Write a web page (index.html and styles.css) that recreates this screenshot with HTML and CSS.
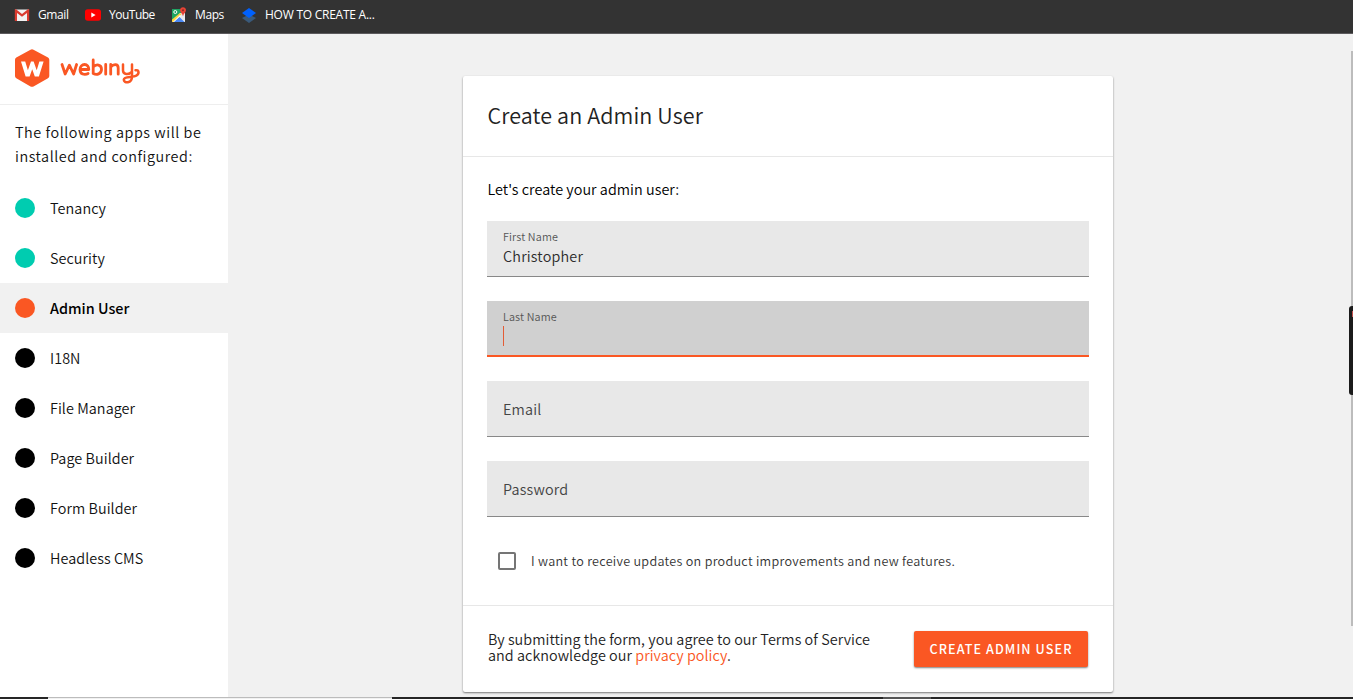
FILE: index.html
```html
<!DOCTYPE html>
<html lang="en">
<head>
<meta charset="utf-8">
<title>Webiny</title>
<link rel="stylesheet" href="styles.css">
</head>
<body>
<nav class="bookmarks">
  <a class="bookmark gmail"><svg width="16" height="16" viewBox="0 0 16 16"><path fill="#f2f2f2" d="M1 2.500h14v11.500H1z"/><path fill="#d93b30" d="M2 2.300 8 7l6-4.700h1.200V14H13V6L8 9.700 3 6v8H.8V2.300z"/></svg><span>Gmail</span></a>
  <a class="bookmark youtube"><svg width="16" height="16" viewBox="0 0 16 16"><rect y="2.300" width="16" height="11.500" rx="2.800" fill="#f00"/><path fill="#fff" d="m6.300 5.600 4.300 2.400-4.300 2.400z"/></svg><span>YouTube</span></a>
  <a class="bookmark maps"><svg width="16" height="16" viewBox="0 0 16 16"><path fill="#1fa463" d="M1 2h10v6L1 15z"/><path fill="#e8eaed" d="M9 6h5v9h-2L7 9z"/><path fill="#fbd341" d="m1 12.500 8-6.500 1.500 1.500L3 15H1z"/><path fill="#fff" d="m2 15 7-7 1 1-6 6z"/><path fill="#4a88f4" d="m3 15 5.500-5 5 5z"/><circle cx="4.300" cy="5" r="1.500" fill="none" stroke="#fff"/><path fill="#e74335" d="M12 .3c2 0 3 1.400 3 3 0 2-2.300 3-3 6-.7-3-3-4-3-6 0-1.600 1-3 3-3z"/><circle cx="12" cy="3.300" r="1" fill="#8c2b22"/></svg><span>Maps</span></a>
  <a class="bookmark article"><svg width="16" height="16" viewBox="0 0 16 16"><path fill="#3a5a7b" d="m1 11 7-3.500 7 3.500-7 5z"/><path fill="#0061fe" d="m1 6 7-5 7 5-7 5z"/></svg><span>HOW TO CREATE A...</span></a>
</nav>
<div class="layout">
  <aside class="sidebar">
    <div class="brand">
      <svg width="126" height="40" viewBox="0 0 126 40"><path fill="#fa5723" d="M15.500 1.700q1.500-.9 3 0L33 9.500q1.300.8 1.300 2.200v16.300q0 1.500-1.300 2.200L18.500 38.400q-1.500.8-3 0L1.300 30.200Q0 29.500 0 28V11.700Q0 10.300 1.300 9.500z"/><path fill="#fff" d="M6 13.500h4.200l2.700 8.800 3.100-8.800h2.600l3.100 8.800 2.700-8.800h4.200L23.900 28.500h-4.100l-2.600-7.200-2.600 7.200h-4z"/><g fill="none" stroke="#fa5723" stroke-width="2.800" stroke-linecap="round" stroke-linejoin="round"><path d="m47 16.500 3.200 9.500 4.200-8.800 4.200 8.800 3-9.500"/><path d="M65.500 21.500h8.300c0-3-1.700-5-4.200-5s-4.600 2-4.600 5c0 3.300 2 4.800 4.800 4.800q2 0 3.300-.8"/><path d="M78.200 12v13.500m0-6.500c3-3.500 8.300-2.500 8.300 2.200 0 5-4.800 6-8.300 4.300M90.700 16.500V26.200M95.700 26.200v-9.700m0 2.500c2.500-3 7.500-3.500 7.500 1v6.200"/><path stroke-width="2.500" d="M108 16.500v6c0 4.200 6 4.500 8.800 1.200M117 16.500v12c0 7.300-8.200 7-8.200 3.200 0-4 9.300-1.800 12.700-4.200 3.300-2.400 2.200-6-1-5.200"/></g></svg>
    </div>
    <p class="intro">The following apps will be<br>installed and configured:</p>
    <ul class="steps">
      <li class="step done"><i></i><span>Tenancy</span></li>
      <li class="step done"><i></i><span>Security</span></li>
      <li class="step active"><i></i><span>Admin User</span></li>
      <li class="step"><i></i><span>I18N</span></li>
      <li class="step"><i></i><span>File Manager</span></li>
      <li class="step"><i></i><span>Page Builder</span></li>
      <li class="step"><i></i><span>Form Builder</span></li>
      <li class="step"><i></i><span>Headless CMS</span></li>
    </ul>
  </aside>
  <main class="content">
    <section class="card">
      <h1 class="title">Create an Admin User</h1>
      <div class="form">
        <p class="lead">Let's create your admin user:</p>
        <div class="field filled"><label>First Name</label><span class="value">Christopher</span></div>
        <div class="field filled focused"><label>Last Name</label><span class="caret"></span></div>
        <div class="field"><label>Email</label></div>
        <div class="field"><label>Password</label></div>
        <div class="consent"><i class="checkbox"></i><span>I want to receive updates on product improvements and new features.</span></div>
      </div>
      <footer class="footer">
        <p class="terms">By submitting the form, you agree to our Terms of Service<br>and acknowledge our <a>privacy policy</a>.</p>
        <button class="submit">CREATE ADMIN USER</button>
      </footer>
    </section>
  </main>
</div>
<div class="scroll-thumb"></div>
<div class="side-tab"><i></i></div>
<div class="bottom-edge"><i class="tray"></i><i class="task"></i></div>
</body>
</html>
```
FILE: styles.css
```css
* { box-sizing: border-box; }
body {
  margin: 0;
  width: 1353px;
  height: 699px;
  overflow: hidden;
  position: relative;
  background: #f1f1f1;
  color: #111;
  font-family: "Noto Sans CJK SC", "Noto Sans", sans-serif;
  font-weight: 350;
  font-size: 14.4px;
}
p, h1, ul { margin: 0; padding: 0; }
.bookmarks {
  height: 34px;
  display: flex;
  align-items: flex-start;
  padding: 7px 0 0 14px;
  background: #333;
  border-bottom: 1px solid #5c5a5d;
  color: #fff;
  font: 12px/16px "Open Sans", "Noto Sans", sans-serif;
}
.bookmark { display: flex; gap: 8px; white-space: nowrap; }
.gmail { width: 71px; letter-spacing: -.4px; }
.youtube { width: 86px; letter-spacing: -.5px; }
.maps { width: 70px; letter-spacing: -.4px; }
.article { letter-spacing: -.25px; }
.layout { display: flex; height: 665px; }
.sidebar { width: 228px; background: #fff; }
.brand {
  height: 71px;
  padding: 14px 0 0 15px;
  border-bottom: 1px solid #eee;
}
.brand svg { display: block; }
.intro { padding: 15px 0 0 15px; height: 78px; line-height: 24px; letter-spacing: .55px; white-space: nowrap; }
.steps { list-style: none; }
.step { height: 50px; padding-left: 15px; display: flex; align-items: center; gap: 15px; letter-spacing: .06px; }
.step i { width: 20px; height: 20px; border-radius: 50%; background: #000; }
.step span { padding-bottom: 2px; }
.step.done i { background: #00ccb0; }
.step.active { background: #f1f1f1; font-weight: 500; color: #000; letter-spacing: 0; }
.step.active i { background: #fa5723; }
.content { flex: 1; padding: 42px 0 0 235px; }
.card {
  width: 650px;
  height: 616px;
  background: #fff;
  border-radius: 2px;
  box-shadow: 0 1px 2px rgba(0, 0, 0, .5);
}
.title {
  height: 81px;
  padding: 0 24.5px;
  line-height: 78px;
  font-size: 21.5px;
  font-weight: 350;
  letter-spacing: .1px;
  color: #222;
  border-bottom: 1px solid #e7e7e7;
}
.form { height: 448px; padding: 20px 24px 0; }
.lead { height: 44px; line-height: 24px; color: #000; padding-left: .5px; letter-spacing: .04px; }
.field {
  height: 56px;
  margin-bottom: 24px;
  padding: 0 16px;
  background: #e8e8e8;
  border-bottom: 1px solid #888;
  color: #444;
  line-height: 55px;
  letter-spacing: .18px;
}
.field label { display: block; }
.field.filled { padding-top: 6px; line-height: 20px; }
.filled label { height: 18px; line-height: 18px; font-size: 10.8px; color: #555; letter-spacing: .14px; }
.value { display: block; line-height: 21px; color: #2c2c2c; }
.field.focused { background: #d0d0d0; border-bottom: 2px solid #fa5723; }
.caret { display: block; width: 1px; height: 20px; margin-top: 1px; background: #e35c35; }
.consent { display: flex; align-items: center; gap: 15px; height: 40px; padding-left: 11px; font-size: 12.6px; letter-spacing: .29px; color: #333; white-space: nowrap; }
.consent span { padding-bottom: 2px; }
.checkbox { width: 18px; height: 18px; border: 2px solid #757575; border-radius: 2px; }
.footer {
  height: 87px;
  border-top: 1px solid #e7e7e7;
  display: flex;
  justify-content: space-between;
  align-items: flex-start;
  padding: 25px 25px 0;
}
.terms { line-height: 16px; color: #222; white-space: nowrap; letter-spacing: .05px; }
.terms a { color: #fa5723; }
.submit {
  width: 174px;
  height: 36px;
  padding: 0;
  border: 0;
  border-radius: 2px;
  background: #fa5723;
  color: #fff;
  font: 500 12.6px/36px "Noto Sans CJK SC", sans-serif;
  letter-spacing: 1.08px;
  white-space: nowrap;
  box-shadow: 0 1px 2px rgba(0, 0, 0, .5);
}
.scroll-thumb { position: absolute; left: 1351px; top: 51px; width: 2px; height: 575px; background: #bcbcbc; }
.side-tab { position: absolute; left: 1349px; top: 306px; width: 4px; height: 89px; background: #1b1b1b; border-radius: 3px 0 0 3px; }
.side-tab i { position: absolute; left: 3px; top: 5px; width: 1px; height: 6px; background: #c0504d; }
.bottom-edge { position: absolute; left: 0; top: 697px; width: 1353px; height: 2px; background: #262626; }
.bottom-edge i { position: absolute; top: 0; height: 2px; }
.tray { left: 48px; width: 344px; background: #f1f1f1; border-top: 1px solid #bcbcbc; }
.task { left: 883px; width: 48px; background: #555; }
```
